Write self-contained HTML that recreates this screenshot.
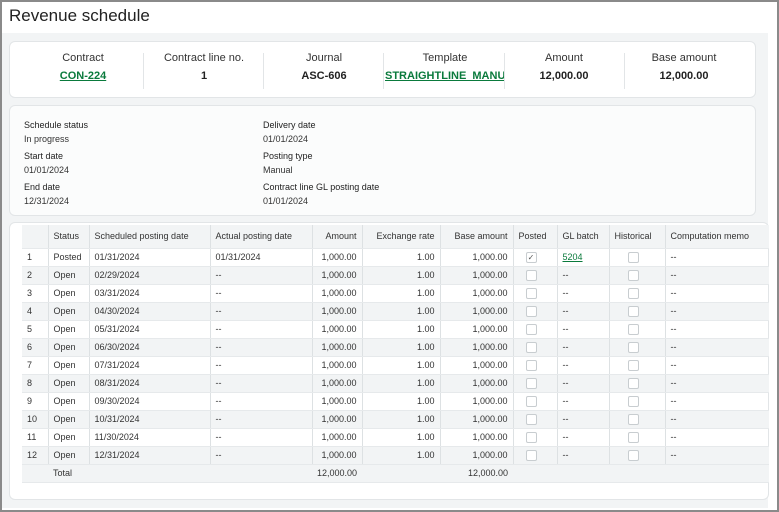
<!DOCTYPE html>
<html><head><style>
*{box-sizing:border-box;margin:0;padding:0}
body{width:779px;height:512px;overflow:hidden;font-family:"Liberation Sans",Arial,sans-serif;color:#222;background:#fff}
.frame{position:absolute;left:0;top:0;width:779px;height:512px;border:2px solid #8a8a8a;background:#fff}
.bg{position:absolute;left:2px;top:33px;width:766px;height:475px;background:#f2f4f5}
h1{position:absolute;left:9px;top:6px;font-size:17px;font-weight:normal;color:#222}
.card{position:absolute;background:#fff;border:1px solid #e2e5e7;border-radius:6px}
.c1{left:9px;top:41px;width:747px;height:57px}
.col{position:absolute;top:10px;width:120px;height:38px;text-align:center;font-size:11px}
.col .l{color:#333}
.col .v{font-weight:bold;margin-top:6px;white-space:nowrap;overflow:hidden}
.div{position:absolute;top:11px;width:1px;height:36px;background:#e2e5e7}
a{color:#0a7a3c;text-decoration:underline}
.c2{left:9px;top:105px;width:747px;height:111px;background:#fbfcfc}
.f{position:absolute;font-size:9px}
.f b{font-weight:normal;color:#222;display:block}
.f span{display:block;margin-top:4px;color:#333}
.c3{left:9px;top:222px;width:760px;height:278px}
table{position:absolute;left:12px;top:2px;border-collapse:collapse;font-size:9px;width:747px;table-layout:fixed}
td,th{height:18px;padding:0 5px;border-right:1px solid #dde1e3;border-bottom:1px solid #e6e9eb;white-space:nowrap;overflow:hidden;font-weight:normal;text-align:left;color:#333}
th{height:23px;background:#f2f4f5}
tr:nth-child(odd) td{background:#f2f4f5}
.r{text-align:right}
.cb{display:inline-block;width:11px;height:11px;border:1px solid #c8cdd0;border-radius:2px;background:#fff;vertical-align:middle;font-size:8px;line-height:9px;text-align:center;color:#555}
tr.tot td{background:#f2f4f5;border-right:none}
</style></head><body>
<div class="frame"></div>
<div class="bg"></div>
<h1>Revenue schedule</h1>
<div class="card c1">
<div class="col" style="left:13px"><div class="l">Contract</div><div class="v"><a>CON-224</a></div></div>
<div class="div" style="left:133px"></div>
<div class="col" style="left:134px"><div class="l">Contract line no.</div><div class="v">1</div></div>
<div class="div" style="left:253px"></div>
<div class="col" style="left:254px"><div class="l">Journal</div><div class="v">ASC-606</div></div>
<div class="div" style="left:373px"></div>
<div class="col" style="left:375px"><div class="l">Template</div><div class="v" style="text-align:left"><a>STRAIGHTLINE_MANUAL</a></div></div>
<div class="div" style="left:494px"></div>
<div class="col" style="left:494px"><div class="l">Amount</div><div class="v">12,000.00</div></div>
<div class="div" style="left:614px"></div>
<div class="col" style="left:614px"><div class="l">Base amount</div><div class="v">12,000.00</div></div>
</div>
<div class="card c2">
<div class="f" style="left:14px;top:14px"><b>Schedule status</b><span>In progress</span></div>
<div class="f" style="left:14px;top:45px"><b>Start date</b><span>01/01/2024</span></div>
<div class="f" style="left:14px;top:76px"><b>End date</b><span>12/31/2024</span></div>
<div class="f" style="left:253px;top:14px"><b>Delivery date</b><span>01/01/2024</span></div>
<div class="f" style="left:253px;top:45px"><b>Posting type</b><span>Manual</span></div>
<div class="f" style="left:253px;top:76px"><b>Contract line GL posting date</b><span>01/01/2024</span></div>
</div>
<div class="card c3">
<table>
<colgroup><col style="width:26px"><col style="width:41px"><col style="width:121px"><col style="width:102px"><col style="width:50px"><col style="width:78px"><col style="width:73px"><col style="width:44px"><col style="width:52px"><col style="width:56px"><col style="width:104px"></colgroup>
<tr><th></th><th>Status</th><th>Scheduled posting date</th><th>Actual posting date</th><th class="r">Amount</th><th class="r">Exchange rate</th><th class="r">Base amount</th><th>Posted</th><th>GL batch</th><th>Historical</th><th style="border-right:none">Computation memo</th></tr>
<tr><td>1</td><td>Posted</td><td>01/31/2024</td><td>01/31/2024</td><td class="r">1,000.00</td><td class="r">1.00</td><td class="r">1,000.00</td><td style="padding-left:12px"><span class="cb">✓</span></td><td><a>5204</a></td><td style="padding-left:18px"><span class="cb"></span></td><td style="border-right:none">--</td></tr>
<tr><td>2</td><td>Open</td><td>02/29/2024</td><td>--</td><td class="r">1,000.00</td><td class="r">1.00</td><td class="r">1,000.00</td><td style="padding-left:12px"><span class="cb"></span></td><td>--</td><td style="padding-left:18px"><span class="cb"></span></td><td style="border-right:none">--</td></tr>
<tr><td>3</td><td>Open</td><td>03/31/2024</td><td>--</td><td class="r">1,000.00</td><td class="r">1.00</td><td class="r">1,000.00</td><td style="padding-left:12px"><span class="cb"></span></td><td>--</td><td style="padding-left:18px"><span class="cb"></span></td><td style="border-right:none">--</td></tr>
<tr><td>4</td><td>Open</td><td>04/30/2024</td><td>--</td><td class="r">1,000.00</td><td class="r">1.00</td><td class="r">1,000.00</td><td style="padding-left:12px"><span class="cb"></span></td><td>--</td><td style="padding-left:18px"><span class="cb"></span></td><td style="border-right:none">--</td></tr>
<tr><td>5</td><td>Open</td><td>05/31/2024</td><td>--</td><td class="r">1,000.00</td><td class="r">1.00</td><td class="r">1,000.00</td><td style="padding-left:12px"><span class="cb"></span></td><td>--</td><td style="padding-left:18px"><span class="cb"></span></td><td style="border-right:none">--</td></tr>
<tr><td>6</td><td>Open</td><td>06/30/2024</td><td>--</td><td class="r">1,000.00</td><td class="r">1.00</td><td class="r">1,000.00</td><td style="padding-left:12px"><span class="cb"></span></td><td>--</td><td style="padding-left:18px"><span class="cb"></span></td><td style="border-right:none">--</td></tr>
<tr><td>7</td><td>Open</td><td>07/31/2024</td><td>--</td><td class="r">1,000.00</td><td class="r">1.00</td><td class="r">1,000.00</td><td style="padding-left:12px"><span class="cb"></span></td><td>--</td><td style="padding-left:18px"><span class="cb"></span></td><td style="border-right:none">--</td></tr>
<tr><td>8</td><td>Open</td><td>08/31/2024</td><td>--</td><td class="r">1,000.00</td><td class="r">1.00</td><td class="r">1,000.00</td><td style="padding-left:12px"><span class="cb"></span></td><td>--</td><td style="padding-left:18px"><span class="cb"></span></td><td style="border-right:none">--</td></tr>
<tr><td>9</td><td>Open</td><td>09/30/2024</td><td>--</td><td class="r">1,000.00</td><td class="r">1.00</td><td class="r">1,000.00</td><td style="padding-left:12px"><span class="cb"></span></td><td>--</td><td style="padding-left:18px"><span class="cb"></span></td><td style="border-right:none">--</td></tr>
<tr><td>10</td><td>Open</td><td>10/31/2024</td><td>--</td><td class="r">1,000.00</td><td class="r">1.00</td><td class="r">1,000.00</td><td style="padding-left:12px"><span class="cb"></span></td><td>--</td><td style="padding-left:18px"><span class="cb"></span></td><td style="border-right:none">--</td></tr>
<tr><td>11</td><td>Open</td><td>11/30/2024</td><td>--</td><td class="r">1,000.00</td><td class="r">1.00</td><td class="r">1,000.00</td><td style="padding-left:12px"><span class="cb"></span></td><td>--</td><td style="padding-left:18px"><span class="cb"></span></td><td style="border-right:none">--</td></tr>
<tr><td>12</td><td>Open</td><td>12/31/2024</td><td>--</td><td class="r">1,000.00</td><td class="r">1.00</td><td class="r">1,000.00</td><td style="padding-left:12px"><span class="cb"></span></td><td>--</td><td style="padding-left:18px"><span class="cb"></span></td><td style="border-right:none">--</td></tr>
<tr class="tot"><td></td><td>Total</td><td></td><td></td><td class="r">12,000.00</td><td></td><td class="r">12,000.00</td><td></td><td></td><td></td><td></td></tr>
</table>
</div>
</body></html>
